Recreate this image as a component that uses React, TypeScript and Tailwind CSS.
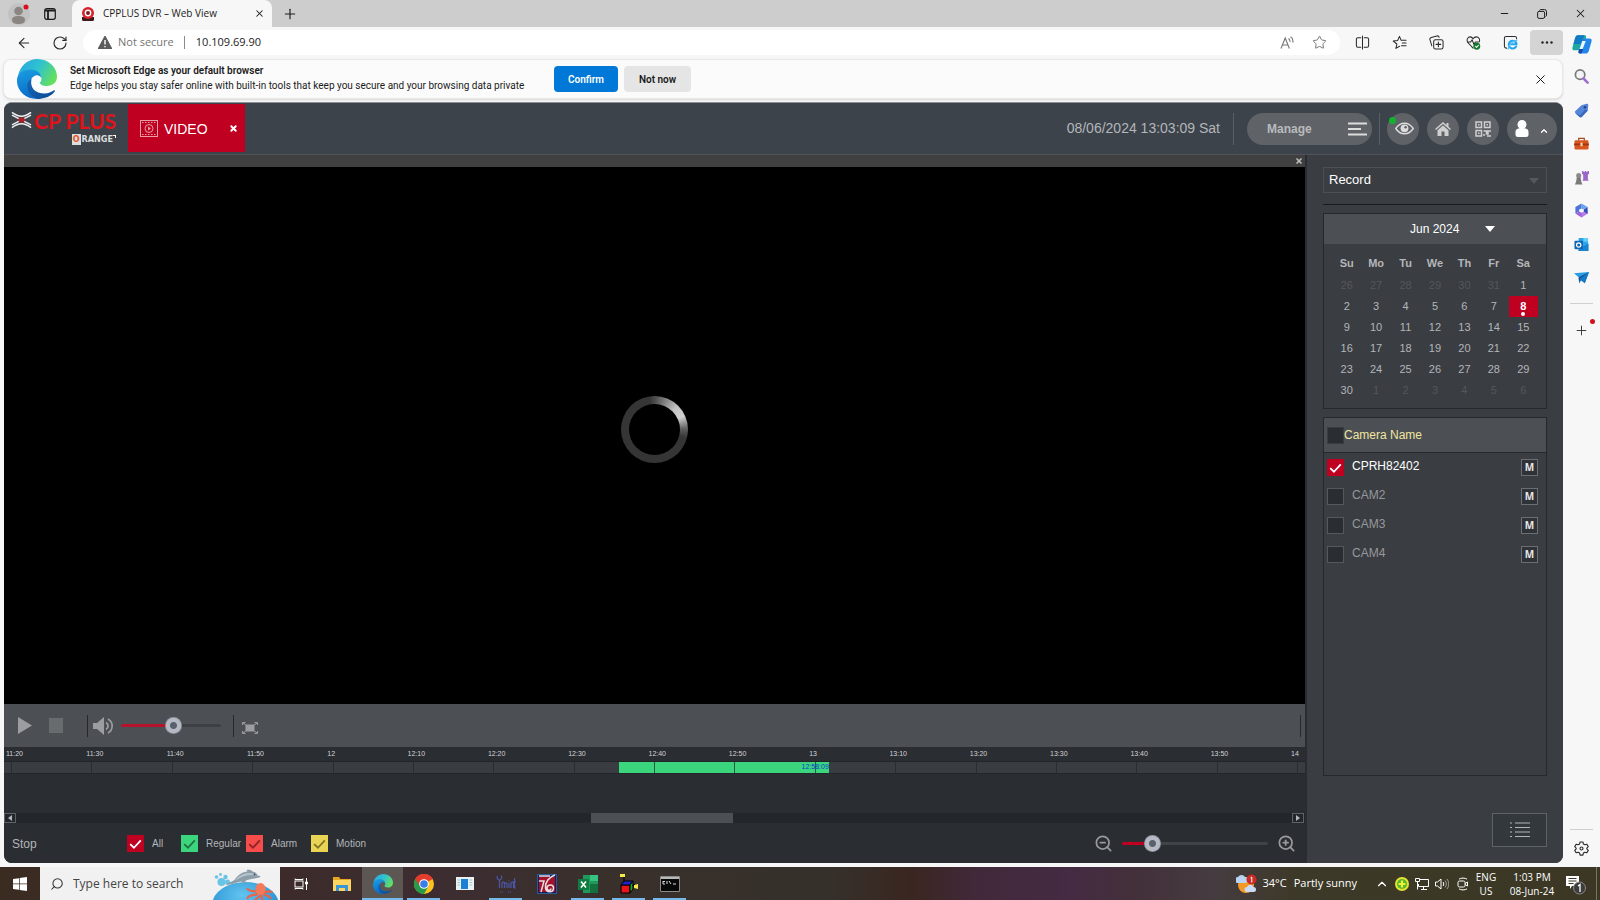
import type { ReactNode } from "react";
import {
  ArrowLeft,
  ChevronUp,
  Minus,
  Plus,
  RotateCw,
  Search,
  Star,
  X,
  ZoomIn,
  ZoomOut,
} from "lucide-react";

const UI = "font-['Open_Sans','Noto_Sans',sans-serif]";
const ARIAL = "font-['Liberation_Sans',Arial,sans-serif]";
const NARROW = "font-['Liberation_Sans_Narrow','DejaVu_Sans_Condensed',sans-serif]";

function EdgeLogo({ className, id }: { className: string; id: string }) {
  return (
    <svg viewBox="0 0 40 40" className={className} aria-hidden="true">
      <defs>
        <linearGradient id={id + "a"} x1="0" y1="0.2" x2="1" y2="0.6">
          <stop offset="0" stopColor="#2aa7e0" />
          <stop offset="0.5" stopColor="#2fc3cf" />
          <stop offset="1" stopColor="#66e05a" />
        </linearGradient>
        <linearGradient id={id + "b"} x1="0" y1="0" x2="0.3" y2="1">
          <stop offset="0" stopColor="#1ba0e2" />
          <stop offset="1" stopColor="#0a6cc8" />
        </linearGradient>
        <linearGradient id={id + "c"} x1="0" y1="0" x2="1" y2="1">
          <stop offset="0" stopColor="#1466b8" />
          <stop offset="1" stopColor="#0d4a94" />
        </linearGradient>
      </defs>
      <path d="M1 18C2 8 10 0 20.500 0 32 0 40 8.500 40 17.500c0 6-4.500 9.500-10 9.500-4.500 0-7-1.500-7-3 0-1 1.500-1.600 1.500-4.500 0-4.500-4.500-8-10.500-8C8 11.500 3 14 1 18z" fill={`url(#${id}a)`} />
      <path d="M0 20C1 14 6.500 10.500 13.500 10.500c6 0 10.500 3.500 11 8.500-1.500-2.500-4-3.200-6-2.500-4 1.400-6.500 6-5 11.500 1 5 5 10 11 11.500C22 40 21 40 20 40 8 40-1 31 0 20z" fill={`url(#${id}b)`} />
      <path d="M14.500 20c-2 9 4 14.500 13 14.500 4 0 7-1.500 9.200-3 .8-.5 1.600.2 1 1.100C34.500 37 28 40 21.500 39.700 13 39 9.500 30 10.500 25c.5-2.500 2-4 4-5z" fill={`url(#${id}c)`} />
    </svg>
  );
}

function Tick({ color }: { color: string }) {
  return (
    <svg viewBox="0 0 16 16" className="pointer-events-none absolute inset-0 hidden h-full w-full peer-checked:block" aria-hidden="true">
      <path d="M3 8.500 6.500 12 13 5" fill="none" stroke={color} strokeWidth="1.700" />
    </svg>
  );
}

function Check({ id, checked, box, tick = "#ffffff" }: { id: string; checked?: boolean; box: string; tick?: string }) {
  return (
    <span className="relative block h-[17px] w-[17px] shrink-0">
      <input
        id={id}
        type="checkbox"
        defaultChecked={checked}
        className={`peer block h-[17px] w-[17px] appearance-none border ${box}`}
      />
      <Tick color={tick} />
    </span>
  );
}

const SLIDER =
  "h-[3px] appearance-none rounded-full [&::-webkit-slider-thumb]:h-[17px] [&::-webkit-slider-thumb]:w-[17px] [&::-webkit-slider-thumb]:appearance-none [&::-webkit-slider-thumb]:rounded-full [&::-webkit-slider-thumb]:bg-[radial-gradient(circle,#5a606c_0_3px,#b6bac4_4px_7px,#92969f_8px)]";

function TitleBar() {
  return (
    <header className="flex h-[27px] items-center bg-[#cdcdcd] text-[#1b1b1b]">
      <div className="flex w-[72px] items-center gap-[14px] pl-2">
        <button aria-label="Profile" className="relative">
          <svg viewBox="0 0 22 22" className="block h-[22px] w-[22px]">
            <circle cx="11" cy="11" r="11" fill="#c2c2c2" />
            <circle cx="10.500" cy="8" r="4.300" fill="#8b8581" />
            <path d="M4 17c0-3 2.500-4 6.500-4s6.500 1 6.500 4-3 4-6.500 4S4 20 4 17z" fill="#8b8581" />
            <circle cx="18" cy="4" r="2.500" fill="#d90f1c" />
          </svg>
        </button>
        <button aria-label="Tab actions">
          <svg viewBox="0 0 12 12" className="block h-3 w-3" fill="none" stroke="#1b1b1b" strokeWidth="1.200">
            <rect x=".7" y=".7" width="10.600" height="10.600" rx="2" />
            <path d="M1 2.500h10M4 3v8" strokeWidth="1.800" />
          </svg>
        </button>
      </div>
      <div className="flex h-full w-[200px] items-center rounded-t-lg bg-[#f7f7f7] pr-[7px] pl-[9px]">
        <svg viewBox="0 0 14 14" className="h-[14px] w-[14px]" aria-hidden="true">
          <path d="M1 10h12v2.500a1.500 1.500 0 0 1-1.500 1.500h-9A1.500 1.500 0 0 1 1 12.500z" fill="#3a1a1a" />
          <circle cx="7" cy="6" r="6" fill="#d8202b" />
          <circle cx="7" cy="6" r="3.400" fill="#fff" />
          <circle cx="7" cy="6" r="2" fill="#7d1c22" />
        </svg>
        <span className="ml-2 flex-1 text-[10px]">CPPLUS DVR – Web View</span>
        <button aria-label="Close tab"><X className="h-[11px] w-[11px]" strokeWidth={2.200} /></button>
      </div>
      <button aria-label="New tab" className="ml-2.5"><Plus className="h-4 w-4" strokeWidth={1.700} /></button>
      <div className="ml-auto flex items-center pr-px">
        <button aria-label="Minimize" className="grid w-[38px] place-items-center"><Minus className="h-[11px] w-[11px]" strokeWidth={2.500} /></button>
        <button aria-label="Restore" className="grid w-[38px] place-items-center">
          <svg viewBox="0 0 10 10" className="h-[10px] w-[10px]" fill="none" stroke="#1b1b1b">
            <rect x=".6" y="2.400" width="7" height="7" rx="1.500" />
            <path d="M2.500 1.500A1.500 1.500 0 0 1 3.700.6H7.500a2 2 0 0 1 2 2v3.800a1.500 1.500 0 0 1-1 1.200" />
          </svg>
        </button>
        <button aria-label="Close window" className="grid w-[38px] place-items-center"><X className="h-[13px] w-[13px]" strokeWidth={1.900} /></button>
      </div>
    </header>
  );
}

function ToolIcon({ label, children }: { label: string; children: ReactNode }) {
  return (
    <button aria-label={label} className="grid w-[37px] place-items-center">
      <svg viewBox="0 0 16 16" className="h-[15px] w-[15px]" fill="none" stroke="#2b2b2b" strokeWidth="1.100" strokeLinejoin="round" strokeLinecap="round">
        {children}
      </svg>
    </button>
  );
}

function Toolbar() {
  return (
    <div className="flex h-[31px] items-center pr-px">
      <div className="flex w-[83px] items-center gap-5 pl-4 text-[#2b2b2b]">
        <button aria-label="Back"><ArrowLeft className="h-[16px] w-[16px]" strokeWidth={1.600} /></button>
        <button aria-label="Refresh"><RotateCw className="h-[16px] w-[16px]" strokeWidth={1.700} /></button>
      </div>
      <div className="flex h-[25px] flex-1 items-center rounded-full bg-white pr-[13px] pl-[15px] text-[11px]">
        <svg viewBox="0 0 14 13" className="h-[13px] w-[14px]" aria-hidden="true">
          <path d="M7 0 14 13H0z" fill="#5c5c5c" stroke="#5c5c5c" strokeLinejoin="round" />
          <path d="M7 4v4.500M7 10v1.300" stroke="#fff" strokeWidth="1.400" />
        </svg>
        <span className="ml-[6px] text-[#757575]">Not secure</span>
        <span className="mr-[11px] ml-[10px] h-[13px] w-px bg-[#8a8a8a]" />
        <input aria-label="Address" defaultValue="10.109.69.90" className="min-w-0 flex-1 bg-transparent text-[#1b1b1b] outline-none" />
        <button aria-label="Read aloud" className="mr-[18px]">
          <svg viewBox="0 0 14 14" className="h-[14px] w-[14px]" fill="none" stroke="#777" strokeWidth="1.100">
            <path d="M1 12.500 5.200 2l4.200 10.500M2.500 9h5.400M8.500 2.500c1.200.8 1.600 2 1.400 3.400M10.500.8c2 1.200 2.800 3.400 2.300 5.800" />
          </svg>
        </button>
        <button aria-label="Favorite"><Star className="h-[15px] w-[15px] text-[#777]" strokeWidth={1.600} /></button>
      </div>
      <div className="flex items-center pl-1">
        <ToolIcon label="Split screen">
          <path d="M6.200 3H3a1.500 1.500 0 0 0-1.500 1.500v7A1.500 1.500 0 0 0 3 13h3.200M9.800 3H13a1.500 1.500 0 0 1 1.500 1.500v7A1.500 1.500 0 0 1 13 13H9.800M8 1v14" />
        </ToolIcon>
        <ToolIcon label="Favorites">
          <path d="M8 12 4.200 14.300l1-4.700L1.300 6.400 6 5.900 8 1.500l1.600 4H15M11 8.500h4M10 11.500h5" />
        </ToolIcon>
        <ToolIcon label="Collections">
          <rect x="5" y="5" width="10" height="10" rx="2" />
          <path d="M10 7.500v5M7.500 10h5M3 11.500 1 5a2 2 0 0 1 1.400-2.400L8.500 1a2 2 0 0 1 2.300 1.400" />
        </ToolIcon>
        <ToolIcon label="Browser essentials">
          <path d="M7.500 14 2 8C0 5 2 2 4.500 2 6 2 7 3 7.500 4 8.200 3 9.500 2 11 2c2.500 0 4.500 3 3 5.500M1.500 7.500H5l1.500-2.500 2 5 1.500-2.500h3" />
          <circle cx="11.500" cy="12" r="3.700" fill="#137a2c" stroke="none" />
          <path d="m10 12 1.200 1.200 2-2.200" stroke="#fff" />
        </ToolIcon>
        <ToolIcon label="Internet Explorer mode">
          <path d="M4 14H3.500a2 2 0 0 1-2-2V3.500a2 2 0 0 1 2-2h9a2 2 0 0 1 2 2V4" />
          <path d="M14 12.300A4.200 4.200 0 1 1 14.500 9.900H7.500" stroke="#22a6ee" strokeWidth="2.200" />
          <path d="M5.500 15.200c.8-4.500 4.500-8.500 9.500-9.700" stroke="#58c2f5" strokeWidth="1.200" />
        </ToolIcon>
        <button aria-label="Settings and more" className="ml-px grid h-[25px] w-[33px] place-items-center rounded bg-[#d4d4d4]">
          <svg viewBox="0 0 12 3" className="h-[3px] w-3" fill="#222"><circle cx="1.500" cy="1.500" r="1.200" /><circle cx="6" cy="1.500" r="1.200" /><circle cx="10.500" cy="1.500" r="1.200" /></svg>
        </button>
      </div>
    </div>
  );
}

function DefaultBrowserBar() {
  return (
    <section className="mt-px mr-px ml-[3px] flex h-10 items-center rounded-lg border border-[#e8e8e8] bg-[#fbfbfb] pr-3.5 pl-[13px] font-[Roboto,'Noto_Sans',sans-serif] text-[10px] text-[#1b1b1b] shadow-sm">
      <EdgeLogo id="big" className="h-10 w-10 shrink-0" />
      <div className="ml-[13px] w-[458px] pb-[2px] whitespace-nowrap">
        <p className="leading-[15px] font-semibold">Set Microsoft Edge as your default browser</p>
        <p className="leading-[15px]">Edge helps you stay safer online with built-in tools that keep you secure and your browsing data private</p>
      </div>
      <button className="ml-[26px] h-[26px] w-16 rounded bg-[#0078d7] font-semibold text-white">Confirm</button>
      <button className="ml-[6px] h-[26px] w-[67px] rounded bg-[#e5e5e5] font-semibold">Not now</button>
      <button aria-label="Dismiss" className="ml-auto"><X className="h-[15px] w-[15px]" strokeWidth={1.600} /></button>
    </section>
  );
}

function AppHeader() {
  return (
    <div className="flex h-[52px] items-center border-b border-[#50525a] bg-[#3c434a] pr-[6px]">
      <div className="h-full w-[124px] shrink-0">
        <div className="flex items-start pt-[5px] pl-[7px]">
          <svg viewBox="0 0 22 18" className="mt-[3px] h-[18px] w-[21px]" aria-hidden="true">
            <path d="M1 1c4 3 7 4 10 4s6-1 10-4M1 17c4-3 7-4 10-4s6 1 10 4M1 4l20 10M1 14 21 4" fill="none" stroke="#f1f1f1" strokeWidth="1.500" />
            <ellipse cx="11" cy="9" rx="3.500" ry="2.500" fill="#b0202a" />
          </svg>
          <span className="ml-[2px] font-[Lato,sans-serif] text-[21px] leading-[25px] font-bold whitespace-nowrap text-[#e31119]">CP PLUS</span>
        </div>
        <div className={`flex items-center justify-end pt-px pr-[12px] text-[9px] leading-[11px] font-bold text-[#dddddd] ${NARROW}`}>
          <span className="mr-px bg-[#dddddd] px-px text-[#e2571e]">O</span>RANGE
          <span className="mb-1.5 h-[3px] w-[3px] border-t border-r border-white" />
        </div>
      </div>
      <div className="mt-px flex h-[48px] w-[117px] items-center self-start bg-[#c00020] pr-[7px] pl-3 text-white">
        <svg viewBox="0 0 18 17" className="h-[17px] w-[18px]" fill="none" stroke="#e8a0a8" aria-hidden="true">
          <rect x=".5" y=".5" width="17" height="16" />
          <path d="M2 2.500h14M2 14.500h14" strokeDasharray="1.500 1.500" />
          <circle cx="9" cy="8.500" r="4" />
          <path d="m8 6.500 3 2-3 2z" fill="#e8a0a8" stroke="none" />
        </svg>
        <span className="ml-[6px] flex-1 pt-[3px] text-[14px]">VIDEO</span>
        <button aria-label="Close video tab"><X className="h-[9px] w-[9px]" strokeWidth={5} /></button>
      </div>
      <time className="ml-auto text-[14px] text-[#b3b6ba]">08/06/2024 13:03:09 Sat</time>
      <span className="mx-[13px] h-8 w-px bg-[#5a5f65]" />
      <button className="flex h-8 w-[125px] items-center justify-between rounded-full bg-[#5f6267] pr-[5px] pl-5 text-[12px] font-bold text-[#b9bbbe]">
        Manage
        <svg viewBox="0 0 19 14" className="h-[14px] w-[19px]" stroke="#dcdcdc" strokeWidth="2"><path d="M0 1.500h19M0 7h13M0 12.500h19" /></svg>
      </button>
      <span className="mr-[7px] ml-[7px] h-8 w-px bg-[#5a5f65]" />
      <div className="flex items-center gap-2">
        <button aria-label="Live preview" className="relative grid h-8 w-8 place-items-center rounded-full bg-[#5f6267]">
          <svg viewBox="0 0 18 12" className="ml-0.5 h-[13px] w-[19px]"><path d="M.7 6C3 2.500 6 1 9 1s6 1.500 8.300 5C15 9.500 12 11 9 11S3 9.500.7 6z" fill="none" stroke="#dcdcdc" strokeWidth="1.300" /><circle cx="9" cy="5.800" r="3.700" fill="#dcdcdc" /><circle cx="10" cy="4.800" r="1.200" fill="#5f6267" /></svg>
          <span className="absolute top-1 left-[2px] h-[7px] w-[7px] rounded-full bg-[#0fb32d]" />
        </button>
        <button aria-label="Home" className="grid h-8 w-8 place-items-center rounded-full bg-[#5f6267]">
          <svg viewBox="0 0 16 14" className="h-[14px] w-[16px]" fill="#cfcfcf"><path d="M8 0 0 7l1 1 7-6 7 6 1-1-2.500-2.300V1h-2v2z" /><path d="m8 3.500-5.500 4.700V14H6.500V9.500h3V14h4V8.200z" /></svg>
        </button>
        <button aria-label="QR code" className="grid h-8 w-8 place-items-center rounded-full bg-[#5f6267]">
          <svg viewBox="0 0 16 16" className="h-4 w-4" fill="none" stroke="#cfcfcf" strokeWidth="1.500">
            <path d="M1 1h5.500v5.500H1zM9.500 1H15v5.500H9.500zM1 9.500h5.500V15H1z" />
            <path d="M3 3.800h1.500M11.500 3.800H13M3 12.300h1.500M8.500 10h3v3h1.500V10H16M9 15v-2M12 15h4" />
          </svg>
        </button>
        <button aria-label="Account" className="flex h-8 w-[50px] items-center justify-between rounded-full bg-[#5f6267] pr-2 pl-2 text-white">
          <svg viewBox="0 0 14 17" className="h-[17px] w-[14px]" fill="#fff"><circle cx="7" cy="4.500" r="4.500" /><path d="M.5 12C.5 9 3 8 7 8s6.500 1 6.500 4v2.500A2.500 2.500 0 0 1 11 17H3A2.500 2.500 0 0 1 .5 14.500z" /></svg>
          <ChevronUp className="mt-1 h-[10px] w-[10px]" strokeWidth={3} />
        </button>
      </div>
    </div>
  );
}

const MARKS = ["11:20", "11:30", "11:40", "11:50", "12", "12:10", "12:20", "12:30", "12:40", "12:50", "13", "13:10", "13:20", "13:30", "13:40", "13:50"];

function Timeline() {
  return (
    <div className="bg-[#2a2d31] text-[7px] text-[#d2d4d7]">
      <div className="flex h-[14px] items-center pr-[8px] pl-[2px]">
        {MARKS.map((m) => <span key={m} className="flex-1">{m}</span>)}
        <span className="w-[6px]">14</span>
      </div>
      <div className="relative h-[13px] border-y border-[#222529] bg-[#393c40]">
        <div className="absolute inset-y-0 left-[47.300%] w-[16.100%] bg-[#3bd57e]" />
        <div className="relative flex h-full pl-[7px]">
          {MARKS.map((m) => <span key={m} className="flex-1 border-l border-[#222529]/70" />)}
          <span className="w-2 border-l border-[#222529]/70" />
        </div>
        <time className="absolute top-0 right-[36.600%] leading-[9px] text-[#0a3fd0]">12:58:09</time>
      </div>
      <div className="h-[39px]" />
      <div className="flex h-[10px] items-stretch bg-[#23262b] pr-px">
        <button aria-label="Scroll left" className="grid w-3 place-items-center border border-[#5f6266]">
          <svg viewBox="0 0 4 6" className="h-[6px] w-1" fill="#b4b6b9"><path d="M4 0v6L0 3z" /></svg>
        </button>
        <div className="flex-1"><div className="ml-[45.100%] h-full w-[11.100%] bg-[#4c4f54]" /></div>
        <button aria-label="Scroll right" className="grid w-3 place-items-center border border-[#5f6266]">
          <svg viewBox="0 0 4 6" className="h-[6px] w-1" fill="#b4b6b9"><path d="M0 0v6l4-3z" /></svg>
        </button>
      </div>
    </div>
  );
}

function Controls() {
  return (
    <div className="flex h-[43px] items-center bg-[#4c4f54] pr-1 pl-[14px]">
      <button aria-label="Play"><svg viewBox="0 0 14 17" className="h-[17px] w-[14px]" fill="#9b9da0"><path d="M0 0v17l14-8.500z" /></svg></button>
      <button aria-label="Stop" className="ml-[17px] h-[15px] w-[14px] bg-[#696c6f]" />
      <span className="ml-6 h-[22px] w-px bg-[#26282b]" />
      <button aria-label="Mute" className="ml-[5px]">
        <svg viewBox="0 0 20 18" className="h-[18px] w-5" fill="none" stroke="#9b9da0" strokeWidth="1.700">
          <path d="M0 6h4l7-6v18l-7-6H0z" fill="#9b9da0" stroke="none" />
          <path d="M13 5.500a4 4 0 0 1 0 7M15 2a8 8 0 0 1 0 14" />
        </svg>
      </button>
      <input type="range" aria-label="Volume" defaultValue={53} className={`ml-2 w-[100px] bg-[linear-gradient(to_right,#b5122b_50%,#3c3f43_50%)] ${SLIDER}`} />
      <span className="ml-3 h-[22px] w-px bg-[#26282b]" />
      <button aria-label="Full screen" className="mt-[5px] ml-2">
        <svg viewBox="0 0 16 12" className="h-3 w-4" fill="none" stroke="#9b9da0">
          <path d="M.5 3V.5h3M12.500.5h3V3M.5 9v2.500h3M12.500 11.500h3V9M1 1l3 2M15 1l-3 2M1 11l3-2M15 11l-3-2" />
          <rect x="4" y="3" width="8" height="6" fill="#9b9da0" />
        </svg>
      </button>
      <span className="ml-auto h-[22px] w-px bg-[#26282b]" />
    </div>
  );
}

const FILTERS = [
  { id: "all", name: "All", w: "w-[54px]", box: "bg-[#c00020] border-[#c00020]", tick: "#ffffff" },
  { id: "regular", name: "Regular", w: "w-[65px]", box: "bg-[#3bd57e] border-[#3bd57e]", tick: "#23703f" },
  { id: "alarm", name: "Alarm", w: "w-[65px]", box: "bg-[#f74c4c] border-[#f74c4c]", tick: "#8c2424" },
  { id: "motion", name: "Motion", w: "w-[65px]", box: "bg-[#ead453] border-[#ead453]", tick: "#80732a" },
];

function FilterBar() {
  return (
    <div className="flex h-10 items-center bg-[#2a2d31] pr-[9px] pl-2 text-[10px] text-[#b4b6b9]">
      <span className="w-[115px] pt-[2px] text-[12px]">Stop</span>
      {FILTERS.map((f) => (
        <div key={f.id} className={`flex items-center gap-2 whitespace-nowrap ${f.w}`}>
          <Check id={f.id} checked box={f.box} tick={f.tick} />
          <label htmlFor={f.id}>{f.name}</label>
        </div>
      ))}
      <div className="ml-auto flex items-center text-[#97999c]">
        <button aria-label="Zoom out"><ZoomOut className="h-[19px] w-[19px]" strokeWidth={2.200} /></button>
        <input type="range" aria-label="Timeline zoom" defaultValue={17} className={`mx-[9px] w-[146px] bg-[linear-gradient(to_right,#c00020_20%,#404347_20%)] ${SLIDER}`} />
        <button aria-label="Zoom in"><ZoomIn className="h-[19px] w-[19px]" strokeWidth={2.200} /></button>
      </div>
    </div>
  );
}

function Player() {
  return (
    <main className="flex min-w-0 flex-1 flex-col">
      <div className="flex h-[12px] items-center justify-end bg-[#404040] pr-[2px] text-[#bdbdbd]">
        <button aria-label="Close channel"><X className="h-2 w-2" strokeWidth={5} /></button>
      </div>
      <div className="grid flex-1 place-items-center bg-black">
        <div role="status" aria-label="Loading" className="mb-[12px] grid h-[67px] w-[67px] place-items-center rounded-full bg-[conic-gradient(#4a4a4a_0deg,#c4c4c4_45deg,#d0d0d0_65deg,#5a5a5a_90deg,#353535_105deg,#353535_350deg,#4a4a4a_360deg)]">
          <div className="h-[51px] w-[51px] rounded-full bg-black" />
        </div>
      </div>
      <Controls />
      <Timeline />
      <FilterBar />
    </main>
  );
}

const WEEKS = [
  [26, 27, 28, 29, 30, 31, 1],
  [2, 3, 4, 5, 6, 7, 8],
  [9, 10, 11, 12, 13, 14, 15],
  [16, 17, 18, 19, 20, 21, 22],
  [23, 24, 25, 26, 27, 28, 29],
  [30, 1, 2, 3, 4, 5, 6],
];

function Calendar() {
  return (
    <section className="mt-2 h-[196px] border border-[#26292c] text-[11px] text-[#b4b6b9]">
      <div className="flex h-[30px] items-center bg-[#4c4f54] pl-[86px] text-[12px] text-white">
        <span>Jun 2024</span>
        <button aria-label="Choose month" className="ml-[26px]"><svg viewBox="0 0 10 6" className="h-[6px] w-[10px]" fill="#fff"><path d="M0 0h10L5 6z" /></svg></button>
      </div>
      <table className="mt-2 ml-2 w-[206px] table-fixed border-collapse text-center">
        <thead>
          <tr className="h-[23px]">{["Su", "Mo", "Tu", "We", "Th", "Fr", "Sa"].map((d) => <th key={d} className="p-0">{d}</th>)}</tr>
        </thead>
        <tbody>
          {WEEKS.map((week, w) => (
            <tr key={w} className="h-[21px]">
              {week.map((day, i) => {
                const outside = (w === 0 && day > 7) || (w === 5 && day < 30);
                const today = w === 1 && day === 8;
                return (
                  <td key={i} className={today ? "relative bg-[#c00020] p-0 font-bold text-white" : outside ? "p-0 text-[#54575b]" : "p-0"}>
                    {day}
                    {today && <span className="absolute inset-x-0 bottom-px mx-auto h-1 w-1 rounded-full bg-white" />}
                  </td>
                );
              })}
            </tr>
          ))}
        </tbody>
      </table>
    </section>
  );
}

const CAMERAS = ["CPRH82402", "CAM2", "CAM3", "CAM4"];

function SidePanel() {
  return (
    <aside className="flex w-[258px] shrink-0 flex-col border-l-2 border-[#292b35] bg-[#3a3d42] pt-[12px] pr-4 pb-4 pl-4 text-[12px]">
      <div className="relative">
        <select aria-label="Record type" className="block h-[26px] w-full appearance-none border border-[#4c4f54] bg-transparent pl-[5px] text-[13px] text-white">
          <option>Record</option>
        </select>
        <svg viewBox="0 0 10 6" className="pointer-events-none absolute top-[11px] right-2 h-[6px] w-[10px]" fill="#55585c"><path d="M0 0h10L5 6z" /></svg>
      </div>
      <hr className="mt-[11px] border-[#191b1d]" />
      <Calendar />
      <section className="mt-2 flex-1 border border-[#26292c]">
        <div className="flex h-[35px] items-center border-b border-[#26292c] bg-[#4c4f54] pl-[3px] text-[#f0e6a0]">
          <Check id="cam-all" box="bg-[#2a2d31] border-[#393c40]" />
          <label htmlFor="cam-all">Camera Name</label>
        </div>
        <ul className="pr-2 pl-[3px]">
          {CAMERAS.map((c, i) => (
            <li key={c} className="flex h-[29px] items-center">
              <Check id={c} checked={i === 0} box={i === 0 ? "bg-[#c00020] border-[#c00020]" : "bg-[#2a2d31] border-[#55585c]"} />
              <label htmlFor={c} className={`flex-1 pb-1 pl-2 ${i === 0 ? "text-white" : "text-[#96989b]"}`}>{c}</label>
              <button className={`grid h-[17px] w-[17px] place-items-center border border-[#6b6e72] bg-[#2f3236] text-[10px] font-bold text-[#e6e6e6] ${UI}`}>M</button>
            </li>
          ))}
        </ul>
      </section>
      <button aria-label="File list" className="mt-[37px] ml-auto grid h-[34px] w-[55px] place-items-center border border-[#5f6367] bg-[#33383d]">
        <svg viewBox="0 0 20 16" className="h-4 w-5" stroke="#b4b6b9" strokeWidth="1.200"><path d="M0 1h2M5 1h15M0 5.500h2M5 5.500h15M0 10h2M5 10h15M0 14.500h2M5 14.500h15" /></svg>
      </button>
    </aside>
  );
}

function SideIcon({ label, children, size = "h-[15px] w-[15px]" }: { label: string; children: ReactNode; size?: string }) {
  return (
    <button aria-label={label} className="grid h-[33px] w-full place-items-center">
      <svg viewBox="0 0 16 16" className={size} fill="none">{children}</svg>
    </button>
  );
}

function EdgeSidebar() {
  return (
    <aside className="flex w-9 shrink-0 flex-col bg-[#f7f7f7] pr-px">
      <div className="h-[33px]">
        <SideIcon label="Copilot" size="h-5 w-5">
          <path d="M4.500 1H10c1 0 1.600.5 1.200 2L8.700 11c-.5 1.500-1.500 2-3 2H2C.5 13 0 12 .4 10.500L2.600 3C3 1.700 3.500 1 4.500 1z" fill="#1aa8a0" />
          <path d="M4.500 1H10L7 8H1.100L2.600 3C3 1.700 3.500 1 4.500 1z" fill="#1279c4" />
          <path d="M10.500 3.500H14c1.500 0 2 1 1.600 2.500L13.400 13.500c-.4 1.300-1 2-2 2H6.500c-1 0-1.500-.5-1.200-2L8 5.500c.4-1.400 1.200-2 2.500-2z" fill="#2387ea" />
          <path d="M11 5.500 8.500 12H6l2.200-6.500z" fill="#eaf7ff" />
          <path d="M6 12h3l-1.500 3.500h-1C5 15.500 5 14.500 5.300 13.500z" fill="#1745a8" />
        </SideIcon>
      </div>
      <nav className="flex h-[234px] flex-col justify-between">
        <SideIcon label="Search">
          <circle cx="6.500" cy="6" r="5" stroke="#77797d" strokeWidth="1.800" fill="#f4f4f6" />
          <path d="m10 10 4.500 4.500" stroke="#9a6fd0" strokeWidth="2.800" strokeLinecap="round" />
        </SideIcon>
        <SideIcon label="Shopping">
          <path d="M8 2.500 13.500.8c1-.3 1.800.4 1.700 1.400L14.700 8l-6.500 7c-.7.700-1.500.6-2.200 0L1.500 10.800c-.7-.7-.7-1.500 0-2.200z" fill="#5585d8" />
          <path d="M1.500 10.800 6 15c.7.600 1.500.7 2.200 0l6.500-7-3-1-5 6z" fill="#3a68be" />
          <circle cx="11.700" cy="4.500" r="1.300" fill="#23408c" />
        </SideIcon>
        <SideIcon label="Tools">
          <path d="M5 5V2.500h6V5" stroke="#a04a2c" strokeWidth="1.300" />
          <rect x=".5" y="4.500" width="15" height="10" rx="1.500" fill="#d9551f" />
          <path d="M0 8h16v2H0z" fill="#a33511" />
          <rect x="6.800" y="7" width="2.400" height="4" rx=".5" fill="#f4cfa8" />
        </SideIcon>
        <SideIcon label="Games">
          <circle cx="5" cy="6" r="2.700" fill="#8b8b8b" />
          <path d="M3 8h4l.8 4.500 1.200 3H1l1.200-3z" fill="#7a7a7a" />
          <path d="M8.500 1h1.600v1.200h1.300V1h1.700v1.200h1.300V1H16v3l-1.200 1v5l1 1.500H8.800l1-1.500V5L8.500 4z" fill="#9b68c8" />
        </SideIcon>
        <SideIcon label="Microsoft 365">
          <path d="M8 .5 14.500 4.200 10 7 8 5.800z" fill="#6aa3ee" />
          <path d="M8 .5 1.500 4.200v7L5.500 9V7L8 5.800z" fill="#4d74d8" />
          <path d="M1.500 11.200 5.500 9 8 10.500l3 1.800-3 3.200z" fill="#9d63dc" />
          <path d="M8 15.500 14.500 11.500V8L10.500 9 8 10.500z" fill="#b57be8" />
          <path d="M14.500 4.200v7.300l-4-2.500V7z" fill="#2f4fb5" />
        </SideIcon>
        <SideIcon label="Outlook">
          <path d="M5 1h9a1 1 0 0 1 1 1v12H5z" fill="#28a8ea" />
          <path d="M10 1h4a1 1 0 0 1 1 1v3h-5z" fill="#66cdf7" />
          <path d="M4 15h11.500V7L8 11z" fill="#1a86d2" />
          <rect x=".5" y="4" width="9" height="9" rx="1" fill="#0f65b5" />
          <circle cx="5" cy="8.500" r="2.300" stroke="#fff" strokeWidth="1.300" />
        </SideIcon>
        <SideIcon label="Drop">
          <path d="M0 3.500 16 2l-4.500 12L7 9.500z" fill="#2b9be2" />
          <path d="M16 2 5 8.500l.5 5.500 2-2.700L11.500 14z" fill="#1878c4" />
          <path d="M16 2 6.500 9l-1 5L5 8z" fill="#0d4f8e" />
        </SideIcon>
      </nav>
      <hr className="mx-1.5 mt-[9px] border-[#cfcfcf]" />
      <button aria-label="Customize sidebar" className="relative mt-2.5 grid h-[33px] place-items-center text-[#333]">
        <Plus className="h-[15px] w-[15px]" strokeWidth={1.500} />
        <span className="absolute top-[5px] right-[4px] h-[5px] w-[5px] rounded-full bg-[#d0101a]" />
      </button>
      <hr className="mx-1.5 mt-auto border-[#cfcfcf]" />
      <button aria-label="Sidebar settings" className="grid h-[37px] place-items-center">
        <svg viewBox="0 0 16 16" className="h-[15px] w-[15px]" fill="none" stroke="#2b2b2b" strokeWidth="1.200" strokeLinejoin="round">
          <path d="M6.500 1h3l.5 2.100 1.600.9 2.100-.6 1.500 2.600L13.700 7.500v1l1.500 1.500-1.500 2.600-2.100-.6-1.600.9L9.500 15h-3L6 12.900 4.400 12l-2.100.6L.8 10l1.500-1.500v-1L.8 6l1.500-2.600L4.400 4 6 3.100z" />
          <circle cx="8" cy="8" r="1.600" />
        </svg>
      </button>
    </aside>
  );
}

function TaskButton({ label, active, open, children }: { label: string; active?: boolean; open?: boolean; children: ReactNode }) {
  return (
    <button
      aria-label={label}
      className={`relative grid h-full w-[41px] place-items-center ${active ? "bg-[#5d5754]" : ""}`}
    >
      {children}
      {(active || open) && <span className={`absolute bottom-0 h-[2px] bg-[#76b9ed] ${active ? "inset-x-0" : "inset-x-1"}`} />}
    </button>
  );
}

function Taskbar() {
  return (
    <footer className="flex h-[33px] items-center bg-[linear-gradient(to_right,#3b2c22_0%,#3c2b2a_18%,#3d2d31_27%,#39302c_38%,#35302a_52%,#3a2620_57%,#41293a_61%,#452b43_67%,#43303a_71%,#453c40_76%,#3d3928_81%,#3b3724_100%)] text-white">
      <button aria-label="Start" className="grid h-full w-10 place-items-center">
        <svg viewBox="0 0 14 14" className="h-[14px] w-[14px]" fill="#fff"><path d="M0 2 6 1.200v5.400H0zM6.700 1.100 14 0v6.600H6.700zM0 7.300h6v5.500L0 12zM6.700 7.300H14V14l-7.300-1z" /></svg>
      </button>
      <div className="flex h-full w-60 items-center overflow-hidden bg-[#f1f1f1] pl-[10px] text-[#333]">
        <Search className="h-[14px] w-[14px] -scale-x-100" strokeWidth={1.800} />
        <input aria-label="Search" placeholder="Type here to search" className="ml-[9px] w-[139px] bg-transparent text-[12px] outline-none placeholder:text-[#444]" />
        <svg viewBox="0 0 67 33" className="h-[33px] flex-1" aria-hidden="true">
          <defs>
            <radialGradient id="sea" cx="0.45" cy="0.3" r="0.8"><stop offset="0" stopColor="#63c4f0" /><stop offset="1" stopColor="#1280c8" /></radialGradient>
          </defs>
          <ellipse cx="33" cy="37" rx="33" ry="22" fill="url(#sea)" />
          <g fill="#69c3e6"><circle cx="9" cy="15" r="4" /><circle cx="4" cy="10" r="1.800" /><circle cx="13" cy="10" r="2.200" /><circle cx="8" cy="7.500" r="1.400" /><circle cx="15" cy="15" r="2.500" /></g>
          <path d="M13 18c3-3 6-3 9-5 3-5 8-8 13-8.500L34 3c3-.5 5 0 6 1.500 3 .5 4.500 2 5 4l3 .500-1 1.500-5 1c-4 .5-7 1-9 2.500l-1 3.500-3-3c-5 .5-9 3.500-16 3.500z" fill="#8b9eaa" />
          <path d="M23 13.500c3-5 8-7.500 14-7.500 2.500 0 4.500.5 5.500 2-7-.5-13 1-19.500 5.500z" fill="#b4c3cb" />
          <circle cx="42" cy="7.500" r=".8" fill="#33434d" />
          <g fill="none" stroke="#e8644a" strokeWidth="2.200" strokeLinecap="round"><path d="M46 25c-4-1-8 0-11-3M45 27c-4 2-8 0-10 4M48 28c-1 3-4 2-5 5M51 27c3 2 5 1 7 4M50 25c4 1 7-2 9 0M49 29l1 4" /></g>
          <ellipse cx="48" cy="22" rx="5" ry="6" fill="#f47a5a" />
        </svg>
      </div>
      <div className="flex h-full">
        <TaskButton label="Task view"><svg viewBox="0 0 14 12" className="h-3 w-[14px]" fill="none" stroke="#fff"><rect x="1" y="3" width="8" height="6" /><path d="M1 .5v1h8v-1M1 11.500v-1h8v1M12.500 0v12" /><path d="M11.500 4h2v2h-2z" fill="#fff" /></svg></TaskButton>
        <TaskButton label="File Explorer"><svg viewBox="0 0 18 16" className="h-4 w-[18px]"><path d="M0 1h6l1.500 2H18v12H0z" fill="#e5a621" /><path d="M0 4h18v11H0z" fill="#fcd462" /><path d="M3 9h12v6h-3v-3H6v3H3z" fill="#3a94d8" /></svg></TaskButton>
        <TaskButton label="Microsoft Edge" active><EdgeLogo id="small" className="h-5 w-5" /></TaskButton>
        <TaskButton label="Google Chrome" open>
          <svg viewBox="0 0 20 20" className="h-5 w-5">
            <circle cx="10" cy="10" r="10" fill="#fcc31e" />
            <path d="M10 10 1.340 5A10 10 0 0 1 18.660 5z" fill="#e33b2e" />
            <path d="M1.340 5A10 10 0 0 0 10 20l4.330-7.500L10 10z" fill="#269b4c" />
            <path d="M1.340 5A10 10 0 0 1 18.660 5H10a5 5 0 0 0-4.330 7.500z" fill="#e33b2e" />
            <circle cx="10" cy="10" r="4.800" fill="#fff" /><circle cx="10" cy="10" r="3.800" fill="#3a7de8" />
          </svg>
        </TaskButton>
        <TaskButton label="Documents"><svg viewBox="0 0 18 14" className="h-[14px] w-[18px]"><path d="M0 0h18v13H0z" fill="#eaf1f5" /><path d="M5 2h7v10H5z" fill="#1b7fd6" /><path d="M1.500 3h2.500M1.500 5.500h2.500M1.500 8h2.500M13.500 3H16M13.500 5.500H16M13.500 8H16" stroke="#9cb" /></svg></TaskButton>
        <TaskButton label="Imprint" open>
          <svg viewBox="0 0 20 20" className="h-5 w-5" fill="none" stroke="#4a57a8" strokeWidth="1.200">
            <path d="M1 2c0 3 1 4 2.500 4S6 4 5.500 1.500M3.500 6v8M6 14V9c1-1.500 2.500-1 2.500 0v5M8.500 10c1-2 2.500-1 2.500 0v4M13 9v5M13 6.500v1M15 14V9c1-1.500 2.500-1 2.500 0v5M18.500 4v10h1.500M17.500 7.500h2.500" />
            <path d="M4 18h3M12 18h4" strokeDasharray="1 1" />
          </svg>
        </TaskButton>
        <TaskButton label="Version 6">
          <svg viewBox="0 0 20 20" className="h-5 w-5"><path d="M0 0h20v20H0z" fill="#2b5a9a" /><path d="M1 1h18v18H1z" fill="#131f5c" /><path d="M2 3h16v15H2z" fill="#a3122c" /><path d="M2 7h5L4 18M18 1C12 3 8 8 8.500 14c.5 5 8 5 8 0 0-4-6-4-6.500 0 0 3 4 3 4 .5M2 2h11" fill="none" stroke="#e9dfe0" strokeWidth="1.500" /></svg>
        </TaskButton>
        <TaskButton label="Excel" open>
          <svg viewBox="0 0 20 18" className="h-[18px] w-5"><path d="M5 0h15v18H5z" fill="#1f9a5c" /><path d="M12 0h8v6h-8z" fill="#35c481" /><path d="M12 9h8v9h-8z" fill="#14703f" /><path d="M0 4h11v11H0z" fill="#107c41" /><path d="m3 6.500 5 6M8 6.500l-5 6" stroke="#fff" strokeWidth="1.600" /></svg>
        </TaskButton>
        <TaskButton label="Paint blocks" open>
          <svg viewBox="0 0 20 20" className="h-5 w-5"><path d="M2 11h9v8H2z" fill="#e8131b" stroke="#000" /><path d="m2 11 3-4h9l-3 4z" fill="#2222c8" stroke="#000" /><path d="m11 11 3-4v8l-3 4z" fill="#18a528" stroke="#000" /><path d="M1 0h5v3H1zM15 11l4-1v5l-4-1z" fill="#f6e94a" /><path d="M5 3v4M13 12l3-2" stroke="#000" /></svg>
        </TaskButton>
        <TaskButton label="Command Prompt" open><svg viewBox="0 0 20 16" className="h-4 w-5"><path d="M.5.5h19v15H.5z" fill="#080808" stroke="#8a8a8a" /><path d="M1 1h18v2H1z" fill="#b9b9b9" /><path d="M3 5.500h2M3 5v3h2M7 5v3M9 5l2 3M13 8h3" stroke="#ddd" fill="none" /></svg></TaskButton>
      </div>
      <div className="ml-auto flex h-full items-center text-[11px]">
        <button className="flex items-center gap-[5px] whitespace-nowrap">
          <svg viewBox="0 0 21 20" className="h-5 w-[21px]" aria-hidden="true">
            <circle cx="10" cy="11" r="8" fill="#f39a26" />
            <path d="M2 9a3 3 0 0 1 0-6 4 4 0 0 1 7 0 3 3 0 0 1 0 6z" fill="#b9d3f5" />
            <path d="M11 18a2.500 2.500 0 0 1 0-5 3.500 3.500 0 0 1 6.500 0 2.500 2.500 0 0 1 0 5z" fill="#c8dcf8" />
            <circle cx="15.500" cy="5.500" r="5" fill="#c92a22" /><path d="m14.500 4 1.300-1v5.500" fill="none" stroke="#fff" />
          </svg>
          <span>34°C</span><span className="pl-[2px]">Partly sunny</span>
        </button>
        <button aria-label="Show hidden icons" className="ml-[18px]"><ChevronUp className="h-[14px] w-[14px]" strokeWidth={2} /></button>
        <svg viewBox="0 0 14 14" className="ml-1.5 h-[14px] w-[14px]" role="img" aria-label="Antivirus"><circle cx="7" cy="7" r="7" fill="#e8e231" /><circle cx="7" cy="7" r="5" fill="#52b82e" /><path d="M7 3.500v7M3.500 7h7" stroke="#f4f03a" strokeWidth="2.200" /></svg>
        <svg viewBox="0 0 14 14" className="ml-1.5 h-[14px] w-[14px]" fill="none" stroke="#fff" role="img" aria-label="Network"><path d="M5 2.500h8.500v7H3.500V7M6 12.500h6M8.500 10v2.500M.5 1.500h4v3h-4zM2.500 4.500v8" /></svg>
        <svg viewBox="0 0 14 12" className="ml-1.5 h-3 w-[14px]" fill="none" stroke="#fff" role="img" aria-label="Volume"><path d="M.5 4h2L6 1v10L2.500 8h-2zM8 4c1 1.200 1 2.800 0 4" /><path d="M10 2.500c1.800 2 1.800 5 0 7M12 1c2.300 3 2.300 7 0 10" opacity=".5" /></svg>
        <svg viewBox="0 0 12 14" className="ml-2 h-[14px] w-3" fill="none" stroke="#fff" role="img" aria-label="Meet now"><rect x="1" y="4" width="7" height="6" rx="1.500" /><path d="m8 6.500 2.500-1.500v4L8 7.500M2 2.200c2-1.500 6-1.500 8 0M2 11.800c2 1.500 6 1.500 8 0" /></svg>
        <button className="ml-px w-8 text-center text-[10px] leading-[14px]">ENG<br />US</button>
        <button className="ml-1 w-[52px] text-center text-[10px] leading-[14px] whitespace-nowrap">1:03 PM<br />08-Jun-24</button>
        <button aria-label="Notifications" className="mr-2 ml-2 grid place-items-center">
          <svg viewBox="0 0 22 22" className="h-[22px] w-[22px]"><path d="M0 3h13v10H6l-2 3v-3H0z" fill="#fff" /><path d="M2.500 5.500h8M2.500 8h8M2.500 10.500h5" stroke="#3b3724" /><circle cx="13.500" cy="15" r="6" fill="#3c3c3c" stroke="#8a8a8a" /><path d="m12 13 2-1.500V19" fill="none" stroke="#fff" strokeWidth="1.300" /></svg>
        </button>
        <span className="h-full w-1 border-l border-[#77745f]" />
      </div>
    </footer>
  );
}

export default function App() {
  return (
    <div className={`flex min-h-screen flex-col bg-[#f7f7f7] ${UI}`}>
      <TitleBar />
      <div className="flex flex-1">
        <div className="flex min-w-0 flex-1 flex-col">
          <Toolbar />
          <DefaultBrowserBar />
          <div className={`mt-[3px] mr-px mb-1 ml-1 flex flex-1 flex-col overflow-hidden rounded-lg border-t border-[#8b9094] bg-[#2a2d31] ${ARIAL}`}>
            <AppHeader />
            <div className="flex flex-1">
              <Player />
              <SidePanel />
            </div>
          </div>
        </div>
        <EdgeSidebar />
      </div>
      <Taskbar />
    </div>
  );
}
